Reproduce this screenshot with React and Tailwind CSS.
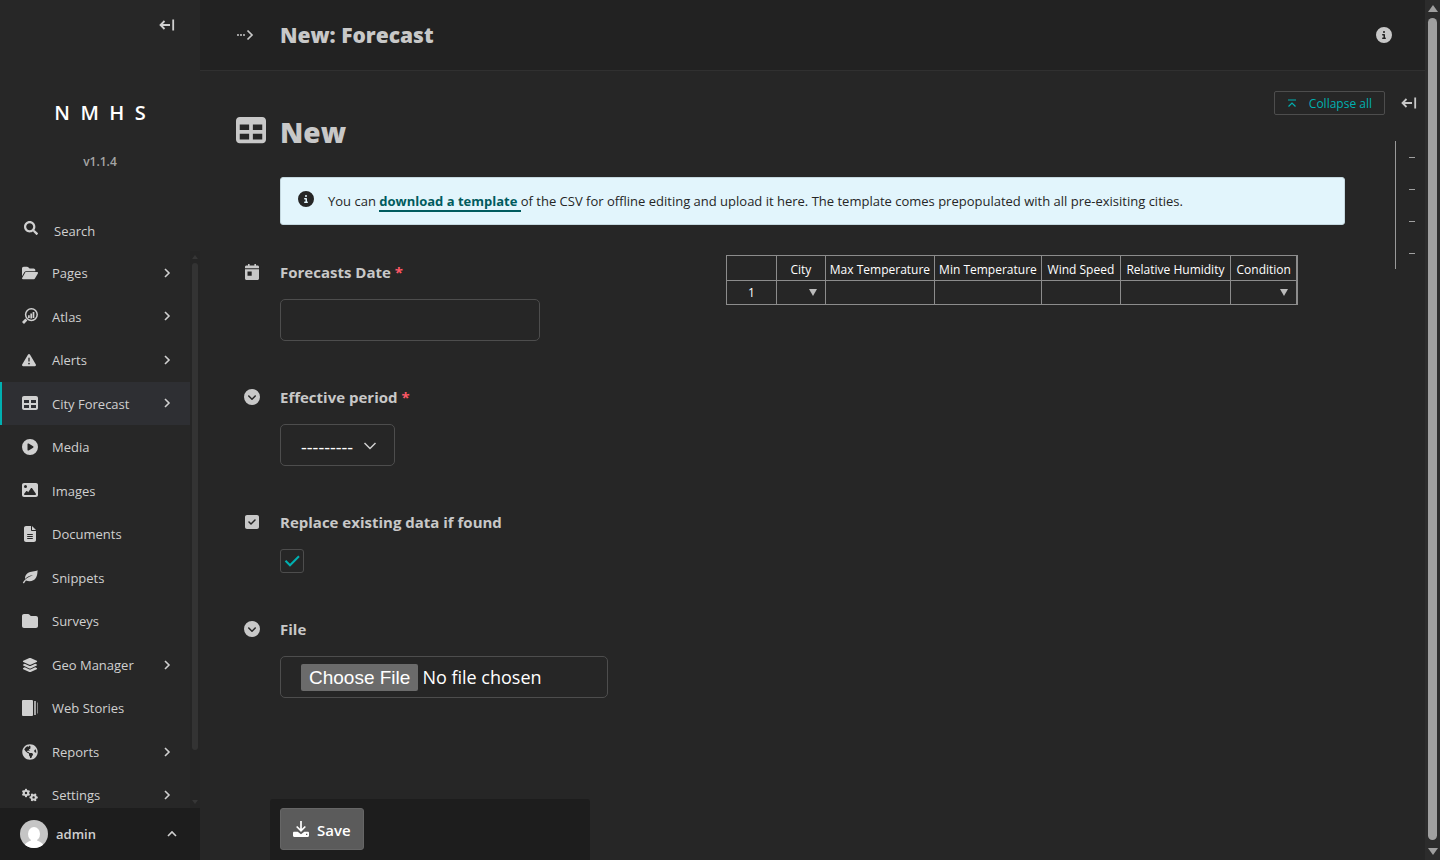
import { useState } from "react";
import { FaGlobeAmericas, FaSearch } from "react-icons/fa";
import {
  FaCircleChevronDown,
  FaCircleInfo,
  FaCirclePlay,
  FaFileLines,
  FaFolder,
  FaFolderOpen,
  FaGears,
  FaImage,
  FaLayerGroup,
  FaSquareCheck,
  FaTable,
  FaTriangleExclamation,
} from "react-icons/fa6";

const CollapseIcon = () => (
  <svg width="16" height="14" viewBox="0 0 16 14" fill="none" stroke="currentColor" strokeWidth="1.8">
    <path d="M5.5 3 1.5 7l4 4M1.5 7H11M14.2 1.5v11" />
  </svg>
);

const ChevronIcon = ({ className }) => (
  <svg className={className} width="10" height="10" viewBox="0 0 10 10" fill="none" stroke="currentColor" strokeWidth="1.6">
    <path d="M3 1l4 4-4 4" />
  </svg>
);

const AtlasIcon = () => (
  <svg width="16" height="16" viewBox="0 0 16 16" fill="none" stroke="currentColor">
    <circle cx="9.4" cy="6.6" r="5.8" strokeWidth="1.5" />
    <path d="M4.4 11.6 1 15" strokeWidth="2.8" />
    <path d="M6.9 10V7.2M9.2 10.6V5.6M11.5 10V4" strokeWidth="1.7" />
  </svg>
);

const LeafIcon = () => (
  <svg width="16" height="16" viewBox="0 0 16 16" fill="currentColor">
    <path d="M15.6 1.200C13 2.600 8.500 2 5.800 4 3.300 5.800 2.700 8.200 3.200 10 5.500 7.500 8 6.500 11 6.300 6.500 7.500 3.200 10 .8 13.600l1.100.9 2-2.900c4 1.600 8.200.6 10.200-3 1.300-2.300 1.300-5 1.500-7.400z" />
  </svg>
);

const StoriesIcon = () => (
  <svg width="17" height="16" viewBox="0 0 17 16" fill="currentColor">
    <rect width="11" height="16" rx="1" />
    <rect x="12" y="1" width="2" height="14" opacity="0.75" />
    <rect x="15" y="2.5" width="1" height="11" opacity="0.55" />
  </svg>
);

const CalendarIcon = () => (
  <svg width="16" height="16" viewBox="0 0 16 16" fill="currentColor">
    <path d="M4 0h1.6v1.6h4.8V0H12v1.6h1.5c.8 0 1.5.6 1.5 1.4v1.2H1V3c0-.8.7-1.4 1.5-1.4H4zM1 5.200h14v9.300c0 .8-.7 1.500-1.500 1.500h-11C1.700 16 1 15.300 1 14.500zM3.500 7.500v4.200h4.200V7.500z" fillRule="evenodd" />
  </svg>
);

const DownloadIcon = () => (
  <svg width="16" height="16" viewBox="0 0 16 16">
    <path d="M8 0v9.500M3.700 5.500 8 9.800l4.300-4.300" fill="none" stroke="currentColor" strokeWidth="1.700" />
    <path d="M1.200 10.800h3.500L8 13.200l3.300-2.400h3.500c.7 0 1.200.5 1.200 1.200v2.800c0 .7-.5 1.200-1.200 1.200H1.200C.5 16 0 15.500 0 14.800V12c0-.7.500-1.200 1.200-1.200zM13 12.800v1.200h1.300v-1.200z" fill="currentColor" fillRule="evenodd" />
  </svg>
);

const menu = [
  { label: "Pages", icon: <FaFolderOpen />, more: true },
  { label: "Atlas", icon: <AtlasIcon />, more: true },
  { label: "Alerts", icon: <FaTriangleExclamation className="size-[14px]" />, more: true },
  { label: "City Forecast", icon: <FaTable />, more: true, active: true },
  { label: "Media", icon: <FaCirclePlay /> },
  { label: "Images", icon: <FaImage /> },
  { label: "Documents", icon: <FaFileLines /> },
  { label: "Snippets", icon: <LeafIcon /> },
  { label: "Surveys", icon: <FaFolder /> },
  { label: "Geo Manager", icon: <FaLayerGroup />, more: true },
  { label: "Web Stories", icon: <StoriesIcon /> },
  { label: "Reports", icon: <FaGlobeAmericas />, more: true },
  { label: "Settings", icon: <FaGears />, more: true },
];

const Sidebar = () => (
  <aside className="flex w-[200px] shrink-0 flex-col bg-[#272727] text-[#d0d0d0]">
    <div className="flex h-[50px] shrink-0 items-center justify-end pr-[25px]">
      <button aria-label="Toggle sidebar">
        <CollapseIcon />
      </button>
    </div>
    <a href="#" className="mt-[49px] flex flex-col items-center">
      <span className="h-7 whitespace-pre text-[20px] leading-7 font-semibold text-white">{"N  M  H  S"}</span>
      <span className="mt-[25px] text-[12px] leading-5 font-semibold text-[#a5a5a5]">v1.1.4</span>
    </a>
    <button className="mt-[39px] flex h-10 shrink-0 items-center gap-4 pl-6 text-[13px]">
      <FaSearch className="mb-1.5 size-[14px]" />
      <span className="pt-0.5">Search</span>
    </button>
    <div className="flex min-h-0 flex-1 overflow-hidden">
      <nav className="min-w-0 flex-1 overflow-hidden">
        <ul className="flex h-[566px] flex-col">
          {menu.map((item) => (
            <li key={item.label} className="flex-1">
              <a
                href="#"
                className={
                  item.active
                    ? "flex h-full items-center border-l-2 border-[#00b0b1] bg-[#2e2f33] pr-[18px] pl-5 text-[13px]"
                    : "flex h-full items-center border-l-2 border-transparent pr-[18px] pl-5 text-[13px]"
                }
              >
                <span className="flex w-[30px] items-center text-[16px]">{item.icon}</span>
                <span className="flex-1 pt-0.5">{item.label}</span>
                {item.more && <ChevronIcon />}
              </a>
            </li>
          ))}
        </ul>
      </nav>
      <div className="flex w-[10px] flex-col items-center bg-[#252525] py-1 text-[#363636]">
        <svg width="6" height="4" viewBox="0 0 6 4" fill="currentColor">
          <path d="M3 0l3 4H0z" />
        </svg>
        <div className="mt-1 h-[487px] w-1.5 rounded-full bg-[#333333]" />
        <svg className="mt-auto" width="6" height="4" viewBox="0 0 6 4" fill="currentColor">
          <path d="M3 4L0 0h6z" />
        </svg>
      </div>
    </div>
    <button className="flex h-[52px] shrink-0 items-center bg-[#1d1d1d] pr-[23px] pl-5">
      <svg width="28" height="28" viewBox="0 0 28 28">
        <clipPath id="avatar">
          <circle cx="14" cy="14" r="14" />
        </clipPath>
        <g clipPath="url(#avatar)">
          <rect width="28" height="28" fill="#c5c5c5" />
          <ellipse cx="14" cy="14" rx="6" ry="7" fill="#fff" />
          <path d="M4 28c0-5 4-6 7-7.500V18h6v2.500c3 1.500 7 2.500 7 7.500z" fill="#fff" />
        </g>
      </svg>
      <span className="ml-2 flex-1 pt-0.5 text-left text-[13px] font-semibold">admin</span>
      <ChevronIcon className="-rotate-90" />
    </button>
  </aside>
);

const Field = ({ id, icon, label, required, children }) => (
  <div className="grid grid-cols-[44px_1fr]">
    <span className="flex h-5 items-center pl-2 text-[16px]">{icon}</span>
    <div>
      <label htmlFor={id} className="mb-[17px] block text-[15px] leading-5 font-bold">
        {label}
        {required && <span className="text-[#fd5765]"> *</span>}
      </label>
      {children}
    </div>
  </div>
);

const columns = [
  { name: "City", width: "w-[49px]", dropdown: true },
  { name: "Max Temperature", width: "w-[109px]" },
  { name: "Min Temperature", width: "w-[107px]" },
  { name: "Wind Speed", width: "w-[79px]" },
  { name: "Relative Humidity", width: "w-[110px]" },
  { name: "Condition", width: "w-[67px]", dropdown: true },
];

const ForecastTable = () => (
  <table className="w-[572px] table-fixed border-collapse border border-r-2 border-[#8c8c8c] text-[12px] leading-4 text-white">
    <thead>
      <tr className="h-[25px]">
        <th className="w-[50px] border border-[#8c8c8c]" />
        {columns.map((col) => (
          <th key={col.name} className={`${col.width} border border-[#8c8c8c] pt-1 text-center font-normal whitespace-nowrap`}>
            {col.name}
          </th>
        ))}
      </tr>
    </thead>
    <tbody>
      <tr className="h-6">
        <th className="border border-[#8c8c8c] text-center font-normal">1</th>
        {columns.map((col) => (
          <td key={col.name} className="border border-[#8c8c8c] pr-2">
            {col.dropdown && (
              <svg className="ml-auto" width="8" height="7" viewBox="0 0 8 7" fill="#bbbbbb">
                <path d="M0 0h8L4 7z" />
              </svg>
            )}
          </td>
        ))}
      </tr>
    </tbody>
  </table>
);

const ForecastForm = () => {
  const [replace, setReplace] = useState(true);

  return (
    <div className="grid grid-cols-[44%_1fr] gap-0.5">
      <div className="flex flex-col gap-[46px] pt-[7px]">
        <Field id="date" icon={<CalendarIcon />} label="Forecasts Date" required>
          <input id="date" type="text" className="block h-[42px] w-[260px] rounded-[5px] border border-[#4d4d4d] px-5 text-white" />
        </Field>
        <Field id="period" icon={<FaCircleChevronDown />} label="Effective period" required>
          <div className="relative w-[115px]">
            <select id="period" className="block h-[42px] w-full appearance-none rounded-[5px] border border-[#4d4d4d] pt-1 pl-5 text-[18px] text-white">
              <option>---------</option>
            </select>
            <svg className="pointer-events-none absolute top-[17px] right-[18px]" width="14" height="10" viewBox="0 0 14 10" fill="none" stroke="#d0d0d0" strokeWidth="1.500">
              <path d="M1.500 2 7 7.500 12.500 2" />
            </svg>
          </div>
        </Field>
        <Field id="replace" icon={<FaSquareCheck />} label="Replace existing data if found">
          <div className="relative size-6">
            <input
              id="replace"
              type="checkbox"
              checked={replace}
              onChange={(e) => setReplace(e.target.checked)}
              className="block size-6 appearance-none rounded-[3px] border border-[#4d4d4d]"
            />
            {replace && (
              <svg className="pointer-events-none absolute inset-0" width="24" height="24" viewBox="0 0 24 24" fill="none" stroke="#00b0b1" strokeWidth="2">
                <path d="M5.500 11.800 10 16.300 19 7.300" />
              </svg>
            )}
          </div>
        </Field>
        <Field id="file" icon={<FaCircleChevronDown />} label="File">
          <input
            id="file"
            type="file"
            className="block h-[42px] w-[328px] rounded-[5px] border border-[#4d4d4d] px-5 py-[7px] text-[18px] leading-6 text-white file:mr-1 file:h-[27px] file:rounded-[2px] file:bg-[#6b6b6b] file:px-2 file:font-['Liberation_Sans',sans-serif] file:text-[19px] file:text-white"
          />
        </Field>
      </div>
      <div>
        <ForecastTable />
      </div>
    </div>
  );
};

const App = () => {
  return (
    <div className="flex h-screen overflow-hidden bg-[#262626] font-['Open_Sans','Noto_Sans',sans-serif] text-[#c8c8c8]">
      <Sidebar />
      <main className="flex min-w-0 flex-1 flex-col">
        <header className="flex h-[71px] shrink-0 items-center border-b border-[#303030] bg-[#222222] pr-[33px] pl-9">
          <button aria-label="Breadcrumbs" className="w-11">
            <svg width="18" height="12" viewBox="0 0 18 12" fill="none" stroke="currentColor" strokeWidth="1.700">
              <path d="M1 6h2M4 6h2M7 6h2M11.500 1.500 16 6l-4.500 4.500" />
            </svg>
          </button>
          <h1 className="flex-1 text-[21px] leading-7 font-extrabold">New: Forecast</h1>
          <button aria-label="Status">
            <FaCircleInfo className="size-4" />
          </button>
        </header>

        <div className="min-h-0 flex-1 overflow-hidden">
          <div className="mt-5 flex h-6 items-center justify-end gap-4 pr-2">
            <button className="flex h-6 items-center gap-3 rounded-[2px] border border-[#4d4d4d] px-3 text-[12px] text-[#00b0b1]">
              <svg width="10" height="9" viewBox="0 0 10 9" fill="none" stroke="currentColor" strokeWidth="1.200">
                <path d="M1 1h8M1.500 7.500 5 4l3.500 3.500" />
              </svg>
              <span className="pt-0.5">Collapse all</span>
            </button>
            <button aria-label="Toggle side panel">
              <CollapseIcon />
            </button>
          </div>
          <div className="flex">
            <div className="min-w-0 flex-1 pl-9">
              <div className="flex h-[34px] items-center">
                <FaTable className="mb-1 w-11 pr-[14px] text-[30px]" />
                <h2 className="text-[28px] leading-8 font-extrabold">New</h2>
              </div>
              <div className="mt-7 mb-[30px] ml-11 flex h-12 items-center rounded-[3px] border border-[#c4d8df] bg-[#e2f5fc] px-[17px] text-[13px] text-[#262626]">
                <FaCircleInfo className="mr-[14px] mb-1 size-4" />
                <p className="pt-0.5">
                  You can{" "}
                  <a href="#" className="border-b-2 border-[#005b5e] font-bold text-[#005b5e]">
                    download a template{" "}
                  </a>
                  of the CSV for offline editing and upload it here. The template comes prepopulated with all pre-exisiting cities.
                </p>
              </div>
              <ForecastForm />
            </div>
            <div className="w-20 shrink-0 pt-[26px] pl-[50px]">
              <div className="flex h-32 flex-col items-end justify-around border-l border-[#999999] pr-[10px]">
                <span className="h-px w-1.5 bg-[#a0a0a0]" />
                <span className="h-px w-1.5 bg-[#a0a0a0]" />
                <span className="h-px w-1.5 bg-[#a0a0a0]" />
                <span className="h-px w-1.5 bg-[#a0a0a0]" />
              </div>
            </div>
          </div>
        </div>

        <footer className="ml-[70px] h-[61px] w-80 shrink-0 rounded-t-[3px] bg-[#1d1d1d] px-[10px] pt-[9px]">
          <button className="flex h-[42px] items-center gap-2 rounded-[3px] border border-[#666666] bg-[#5b5b5b] px-3 text-[15px] font-semibold text-white">
            <DownloadIcon />
            <span className="pt-0.5">Save</span>
          </button>
        </footer>
      </main>
      <div className="flex w-[15px] shrink-0 flex-col items-center bg-[#2c2c2c] py-[5px] text-[#9f9f9f]">
        <svg width="10" height="7" viewBox="0 0 10 7" fill="currentColor">
          <path d="M5 0l5 7H0z" />
        </svg>
        <div className="mt-1.5 mb-2 w-[9px] flex-1 rounded-full bg-[#9f9f9f]" />
        <svg width="10" height="7" viewBox="0 0 10 7" fill="currentColor">
          <path d="M5 7L0 0h10z" />
        </svg>
      </div>
    </div>
  );
};

export default App;
